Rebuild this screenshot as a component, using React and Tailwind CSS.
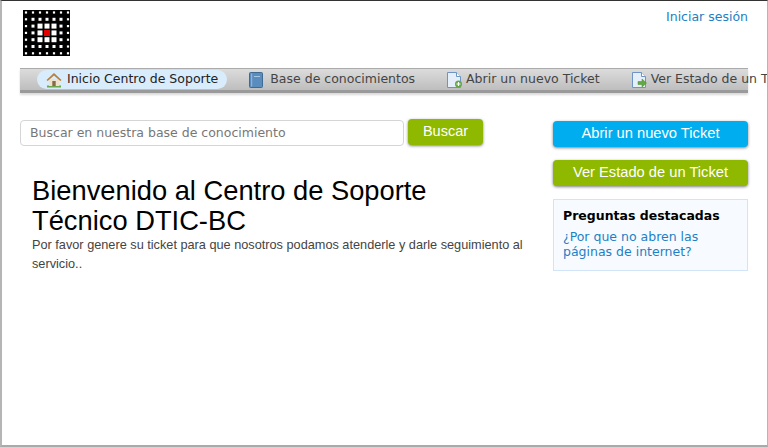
import React from 'react';

const DEJAVU = "font-['DejaVu_Sans',sans-serif]";
const LIBERATION = "font-['Liberation_Sans',Arial,sans-serif]";

// 7x7 dot grid, dots get bigger towards the red centre
function Logo() {
    const dots = [];
    for (let row = 0; row < 7; row++) {
        for (let col = 0; col < 7; col++) {
            const d = Math.max(Math.abs(row - 3), Math.abs(col - 3));
            if (d === 0) continue;
            const size = d === 1 ? 5 : d === 2 ? 3 : 2.2;
            const cx = 3 + col * 7;
            const cy = 2.5 + row * 6.8;
            dots.push(<rect key={`${row}-${col}`} x={cx - size / 2} y={cy - size / 2} width={size} height={size} fill="#fff" />);
        }
    }
    return (
        <svg width="47" height="46" viewBox="0 0 47 46" className="block">
            <rect width="47" height="46" fill="#000" />
            {dots}
            <rect x="21" y="20" width="6" height="6" fill="#e00000" />
        </svg>
    );
}

function HomeIcon() {
    return (
        <svg width="16" height="16" viewBox="0 0 16 16" className="shrink-0">
            <rect x="1" y="13.5" width="14" height="2" fill="#6aa84f" />
            <path d="M3 7h10v7H3z" fill="#efe2cc" />
            <path d="M0.5 8 8 1 15.5 8l-1.2 1L8 3.6 1.7 9z" fill="#b9803c" />
            <path d="M6.3 9h3.4v5H6.3z" fill="#8a6a42" />
        </svg>
    );
}

function BookIcon() {
    return (
        <svg width="14" height="16" viewBox="0 0 14 16" className="shrink-0">
            <rect x="0.5" y="0.5" width="13" height="15" rx="1" fill="#5a8dbd" stroke="#3f6a94" />
            <rect x="2" y="1.5" width="1.2" height="13" fill="#8fb3d6" />
            <rect x="5" y="4" width="6" height="1" fill="#a9c6e2" />
        </svg>
    );
}

function TicketIcon({ arrow }) {
    return (
        <svg width="15" height="16" viewBox="0 0 15 16" className="shrink-0">
            <path d="M0.5 0.5h9l4 4v11h-13z" fill="#e4effa" stroke="#6d94c4" />
            <path d="M9.5 0.5v4h4" fill="#fff" stroke="#6d94c4" />
            {arrow ? (
                <path d="M6 9.5h4V7l4.5 4-4.5 4v-2.5H6z" fill="#64a845" stroke="#4c8a33" strokeWidth="0.5" />
            ) : (
                <>
                    <circle cx="11.5" cy="12" r="3.5" fill="#64a845" />
                    <path d="M9.5 12h4M11.5 10v4" stroke="#fff" strokeWidth="1.2" />
                </>
            )}
        </svg>
    );
}

function App() {
    return (
        <div className={`w-[768px] h-[447px] overflow-hidden bg-white border-t border-t-[#333] border-l-2 border-l-[#b5b5b5] border-r border-r-[#b5b5b5] border-b-2 border-b-[#aaa] ${DEJAVU}`}>
            <div className="ml-[18px] mr-[19px]">
                {/* Header */}
                <div className="flex justify-between h-[67px]">
                    <div className="ml-[3px] pt-[9px]"><Logo /></div>
                    <a className="pt-[8px] text-[12.5px] leading-[16px] text-[#1e80c4]">Iniciar sesión</a>
                </div>

                {/* Nav, the last item runs past the bar as in the reference */}
                <div className="h-[25px] w-[728px] flex items-center whitespace-nowrap text-[12.5px] text-[#444] bg-gradient-to-b from-[#dcdcdc] to-[#bebebe] border-t border-t-[#aaa] border-b-[3px] border-b-[#9a9a9a] shadow-[0_2px_2px_rgba(0,0,0,0.15)]">
                    <div className="ml-[17px] flex items-center gap-[5px] h-[19px] pl-[9px] pr-[9px] rounded-full bg-[#d9ecfb] text-[#222]">
                        <HomeIcon /><span>Inicio Centro de Soporte</span>
                    </div>
                    <div className="ml-[22px] flex items-center gap-[7px]"><BookIcon /><span>Base de conocimientos</span></div>
                    <div className="ml-[32px] flex items-center gap-[4px]"><TicketIcon /><span>Abrir un nuevo Ticket</span></div>
                    <div className="ml-[32px] flex items-center gap-[4px]"><TicketIcon arrow /><span>Ver Estado de un Ticket</span></div>
                </div>

                <div className="flex justify-between mt-[28px]">
                    {/* Main column */}
                    <div className="w-[510px]">
                        <div className="flex items-start gap-[4px] -mt-[1px]">
                            <input
                                type="text"
                                placeholder="Buscar en nuestra base de conocimiento"
                                className="w-[384px] h-[26px] px-[9px] pb-[2px] text-[12.5px] bg-white border border-[#d5d5d5] rounded-[4px] placeholder:text-[#777] outline-none"
                            />
                            <button className={`w-[75px] h-[26px] -mt-[1px] rounded-[4px] bg-[#8fb900] text-white text-[14.5px] shadow-[0_1px_3px_rgba(0,0,0,0.5)] ${LIBERATION}`}>Buscar</button>
                        </div>
                        <h1 className={`mt-[30px] ml-[12px] text-[27.3px] leading-[30px] font-normal text-black ${LIBERATION}`}>
                            Bienvenido al Centro de Soporte<br />Técnico DTIC-BC
                        </h1>
                        <p className={`-mt-[1px] ml-[12px] text-[12.73px] leading-[19px] text-[#444] ${LIBERATION}`}>
                            Por favor genere su ticket para que nosotros podamos atenderle y darle seguimiento al servicio..
                        </p>
                    </div>

                    {/* Sidebar */}
                    <div className="w-[195px] flex flex-col">
                        <button className={`h-[26px] pb-[1px] rounded-[4px] bg-[#00aeef] text-white text-[14.7px] shadow-[0_1px_3px_rgba(0,0,0,0.5)] ${LIBERATION}`}>Abrir un nuevo Ticket</button>
                        <button className={`mt-[13px] h-[26px] pb-[1px] rounded-[4px] bg-[#8fb900] text-white text-[14.7px] shadow-[0_1px_3px_rgba(0,0,0,0.5)] ${LIBERATION}`}>Ver Estado de un Ticket</button>
                        <div className="mt-[13px] h-[72px] px-[9px] pt-[8px] bg-[#f7fbff] border border-[#d2e4f8]">
                            <div className="text-[12.5px] leading-[16px] font-bold text-black">Preguntas destacadas</div>
                            <a className="block mt-[5px] text-[12.5px] leading-[15px] text-[#1e80c4]">¿Por que no abren las páginas de internet?</a>
                        </div>
                    </div>
                </div>
            </div>
        </div>
    );
}

export default App;
